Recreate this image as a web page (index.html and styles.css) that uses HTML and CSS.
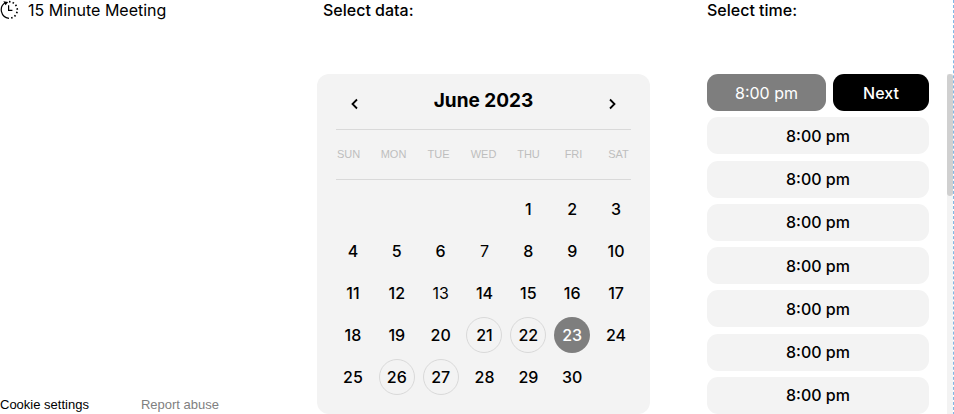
FILE: index.html
```html
<!DOCTYPE html>
<html lang="en">
<head>
<meta charset="utf-8">
<meta name="viewport" content="width=device-width, initial-scale=1">
<title>15 Minute Meeting</title>
<link rel="stylesheet" href="styles.css">
</head>
<body>
<main class="scheduler">
  <section class="meeting">
    <h1 class="meeting-title">
      <svg class="clock" viewBox="0 0 20 20" aria-hidden="true">
        <path d="M9 18.3A8.4 8.4 0 0 1 5.6 2.6" />
        <path class="tip" d="M3.4 1.2 8.2 2 5.6 5.2Z" />
        <path class="dots" d="M9 1.7A8.3 8.3 0 0 1 9 18.3" />
        <path d="M8.6 5.2V10.3H12.4" />
      </svg>
      15 Minute Meeting
    </h1>
    <footer class="links">
      <a class="link" href="#cookies">Cookie settings</a>
      <a class="link link-muted" href="#report">Report abuse</a>
    </footer>
  </section>

  <section class="dates">
    <h2 class="label label-inset">Select data:</h2>
    <div class="calendar">
      <header class="month">
        <button class="arrow" type="button" aria-label="Previous month"><svg viewBox="0 0 12 12"><path d="M8 1.5 3.5 6 8 10.5" /></svg></button>
        <h3 class="month-name">June 2023</h3>
        <button class="arrow" type="button" aria-label="Next month"><svg viewBox="0 0 12 12"><path d="M4 1.5 8.5 6 4 10.5" /></svg></button>
      </header>
      <table class="days">
        <thead>
          <tr><th>SUN</th><th>MON</th><th>TUE</th><th>WED</th><th>THU</th><th>FRI</th><th>SAT</th></tr>
        </thead>
        <tbody>
          <tr><td></td><td></td><td></td><td></td><td><button class="day">1</button></td><td><button class="day">2</button></td><td><button class="day">3</button></td></tr>
          <tr><td><button class="day">4</button></td><td><button class="day">5</button></td><td><button class="day">6</button></td><td><button class="day day-light">7</button></td><td><button class="day">8</button></td><td><button class="day">9</button></td><td><button class="day">10</button></td></tr>
          <tr><td><button class="day">11</button></td><td><button class="day">12</button></td><td><button class="day day-light">13</button></td><td><button class="day">14</button></td><td><button class="day">15</button></td><td><button class="day">16</button></td><td><button class="day">17</button></td></tr>
          <tr><td><button class="day">18</button></td><td><button class="day">19</button></td><td><button class="day">20</button></td><td><button class="day day-open">21</button></td><td><button class="day day-open">22</button></td><td><button class="day day-selected">23</button></td><td><button class="day">24</button></td></tr>
          <tr><td><button class="day">25</button></td><td><button class="day day-open">26</button></td><td><button class="day day-open">27</button></td><td><button class="day">28</button></td><td><button class="day">29</button></td><td><button class="day">30</button></td><td></td></tr>
        </tbody>
      </table>
    </div>
  </section>

  <section class="times">
    <h2 class="label">Select time:</h2>
    <div class="time-area">
      <div class="time-list">
        <div class="time-row">
          <button class="time time-selected" type="button">8:00 pm</button>
          <button class="time time-next" type="button">Next</button>
        </div>
        <button class="time" type="button">8:00 pm</button>
        <button class="time" type="button">8:00 pm</button>
        <button class="time" type="button">8:00 pm</button>
        <button class="time" type="button">8:00 pm</button>
        <button class="time" type="button">8:00 pm</button>
        <button class="time" type="button">8:00 pm</button>
        <button class="time" type="button">8:00 pm</button>
      </div>
      <div class="track"><div class="thumb"></div></div>
    </div>
  </section>
</main>
</body>
</html>
```

FILE: styles.css
```css
* {
  box-sizing: border-box;
}

body {
  margin: 0;
  background: #fff;
  color: #000;
  font-family: Inter, "Liberation Sans", Arial, sans-serif;
  font-size: 16px;
  line-height: 20px;
}

h1, h2, h3 {
  margin: 0;
  font-size: inherit;
  font-weight: 400;
}

button {
  padding: 0;
  border: 0;
  background: none;
  color: inherit;
  font: inherit;
  cursor: pointer;
}

.scheduler {
  display: grid;
  grid-template-columns: 317fr 390fr 246fr;
  min-height: 100vh;
  border-right: 1px dashed #7fb8e6;
  border-bottom: 1px dashed #e2edf3;
}

.meeting {
  display: flex;
  flex-direction: column;
  justify-content: space-between;
}

.meeting-title {
  display: flex;
  align-items: center;
  gap: 8px;
}

.label {
  font-weight: 500;
}

.clock {
  width: 20px;
  height: 20px;
  fill: none;
  stroke: #000;
  stroke-width: 1.2;
}

.tip {
  fill: #000;
  stroke: none;
}

.dots {
  stroke-width: 1.7;
  stroke-dasharray: 1.5 2.2;
}

.links {
  display: flex;
  gap: 52px;
  font-family: "Liberation Sans", Arial, sans-serif;
  font-size: 13px;
  line-height: 18px;
}

.link {
  color: #000;
  text-decoration: none;
}

.link-muted {
  color: #808080;
}

.dates,
.times {
  display: flex;
  flex-direction: column;
  gap: 54px;
}

.dates {
  padding-right: 57px;
}

.label-inset {
  padding-left: 6px;
}

.calendar {
  flex: 1;
  padding-bottom: 16px;
  border-radius: 12px;
  background: #f3f3f3;
}

.month {
  display: flex;
  align-items: center;
  justify-content: space-between;
  height: 56px;
  margin: 0 19px;
  padding: 0 13px;
  border-bottom: 1px solid #d9d9d9;
}

.month-name {
  padding-bottom: 2px;
  font-size: 19px;
  font-weight: 700;
}

.arrow {
  display: flex;
  padding-top: 4px;
}

.arrow svg {
  width: 12px;
  height: 12px;
  fill: none;
  stroke: #000;
  stroke-width: 1.8;
}

.days,
.days thead,
.days tbody {
  display: block;
}

.days tr {
  display: grid;
  grid-template-columns: repeat(7, 1fr);
}

.days thead {
  margin: 0 19px;
  border-bottom: 1px solid #d9d9d9;
}

.days thead tr {
  margin: 0 -10px;
}

.days th {
  padding: 0;
  color: #bebebe;
  font-family: "Liberation Sans", Arial, sans-serif;
  font-size: 11px;
  font-weight: 400;
  line-height: 49px;
  text-align: center;
}

.days tbody {
  padding: 8px 12px 0 14px;
}

.days td {
  display: flex;
  align-items: center;
  justify-content: center;
  height: 42px;
  padding: 0;
}

.day {
  width: 36px;
  height: 36px;
  border-radius: 50%;
  font-weight: 500;
}

.day-light {
  font-weight: 400;
}

.day-open {
  border: 1px solid #d9d9d9;
}

.day-selected {
  background: #7e7e7e;
  color: #fff;
}

.time-area {
  display: flex;
  flex: 1;
  gap: 18px;
}

.time-list {
  display: flex;
  flex: 1;
  flex-direction: column;
  justify-content: space-between;
}

.time-row {
  display: flex;
  gap: 7px;
}

.time {
  height: 37px;
  border-radius: 11px;
  background: #f3f3f3;
  font-weight: 500;
}

.time-selected {
  flex: 119;
  background: #7e7e7e;
  color: #fff;
  font-weight: 400;
}

.time-next {
  flex: 96;
  background: #000;
  color: #fff;
}

.track {
  width: 6px;
  background: #f3f3f3;
}

.thumb {
  height: 36%;
  border-radius: 3px;
  background: #d0d0d0;
}
```
